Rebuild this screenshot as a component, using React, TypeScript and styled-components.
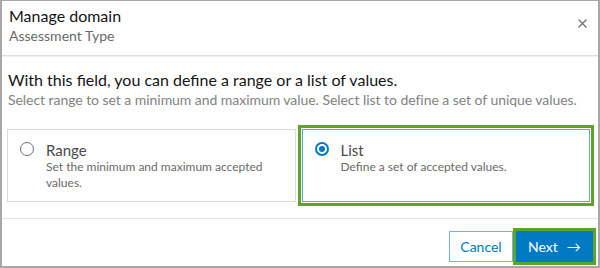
import React from 'react'
import styled, { createGlobalStyle } from 'styled-components'

const GlobalStyle = createGlobalStyle`
  html, body {
    margin: 0;
    padding: 0;
    background: #ffffff;
  }
  body {
    font-family: Lato, "Open Sans", "Liberation Sans", sans-serif;
    -webkit-font-smoothing: antialiased;
  }
`

const Frame = styled.div`
  box-sizing: border-box;
  width: 600px;
  height: 268px;
  border: 2px solid #a7a7a7;
  border-top-width: 1px;
  background: #fff;
  display: flex;
  flex-direction: column;
`

const Header = styled.div`
  display: flex;
  align-items: center;
  justify-content: space-between;
  padding: 4px 8px 10px 7px;
  border-bottom: 1px solid #dedede;
  box-shadow: 0 1px 0 #f1f1f1;
`

const Titles = styled.div`
  display: flex;
  flex-direction: column;
`

const Title = styled.div`
  font-size: 16px;
  line-height: 21px;
  color: #151515;
`

const Subtitle = styled.div`
  font-size: 14px;
  line-height: 19px;
  color: #6a6a6a;
`

const CloseButton = styled.button`
  border: 0;
  background: none;
  padding: 0;
  width: 16px;
  height: 16px;
  margin-top: -3px;
  display: flex;
  align-items: center;
  justify-content: center;
  color: #6a6a6a;
`

const Body = styled.div`
  flex: 1;
  display: flex;
  flex-direction: column;
  padding: 13px 8px 0 5px;
  border-bottom: 1px solid #e3e3e3;
`

const Lead = styled.div`
  font-size: 16px;
  line-height: 21px;
  color: #151515;
  padding-left: 1px;
`

const Hint = styled.div`
  font-size: 14px;
  line-height: 19px;
  letter-spacing: -0.05px;
  color: #828282;
  padding-left: 1px;
`

const Cards = styled.div`
  display: grid;
  grid-template-columns: 1fr 1fr;
  gap: 6px;
  margin-top: 20px;
`

const Card = styled.div<{ $selected?: boolean }>`
  display: flex;
  align-items: flex-start;
  gap: 12px;
  height: 73px;
  box-sizing: border-box;
  padding: 11px 20px 0 12px;
  border: 1px solid ${(p) => (p.$selected ? '#59a9df' : '#dcdcdc')};
  outline: ${(p) => (p.$selected ? '3px solid #5ea42c' : 'none')};
  outline-offset: 1px;
  background: #fff;
`

const Radio = styled.span<{ $checked?: boolean }>`
  flex: none;
  box-sizing: border-box;
  width: 14px;
  height: 14px;
  margin-top: 1px;
  border-radius: 50%;
  border: ${(p) => (p.$checked ? '2px solid #007ac2' : '1px solid #6e6e6e')};
  box-shadow: ${(p) => (p.$checked ? 'inset 0 0 0 1.5px #fff' : 'none')};
  display: flex;
  align-items: center;
  justify-content: center;

  &::after {
    content: '';
    display: ${(p) => (p.$checked ? 'block' : 'none')};
    width: 6px;
    height: 6px;
    border-radius: 50%;
    background: #007ac2;
  }
`

const CardText = styled.div`
  display: flex;
  flex-direction: column;
`

const CardTitle = styled.div`
  font-size: 15px;
  line-height: 18px;
  color: #4a4a4a;
`

const CardDesc = styled.div`
  font-size: 12px;
  line-height: 16px;
  color: #6a6a6a;
`

const Footer = styled.div`
  display: flex;
  justify-content: flex-end;
  align-items: center;
  gap: 3px;
  padding: 12px 5px 4px 0;
`

const Button = styled.button<{ $primary?: boolean }>`
  box-sizing: border-box;
  width: ${(p) => (p.$primary ? '77px' : '64px')};
  height: 31px;
  font-family: inherit;
  font-size: 14px;
  display: flex;
  align-items: center;
  justify-content: ${(p) => (p.$primary ? 'flex-start' : 'center')};
  gap: 9px;
  padding: ${(p) => (p.$primary ? '0 0 0 11px' : '0')};
  border: 1px solid ${(p) => (p.$primary ? '#007ac2' : '#6fb4e2')};
  background: ${(p) => (p.$primary ? '#007ac2' : '#fff')};
  color: ${(p) => (p.$primary ? '#fff' : '#007ac2')};
  outline: ${(p) => (p.$primary ? '3px solid #5ea42c' : 'none')};
  outline-offset: 0;
`

const Arrow = styled.span`
  font-size: 14px;
`

export default function App() {
  return (
    <>
      <GlobalStyle />
      <Frame>
        <Header>
          <Titles>
            <Title>Manage domain</Title>
            <Subtitle>Assessment Type</Subtitle>
          </Titles>
          <CloseButton aria-label="Close">
            <svg width="9" height="9" viewBox="0 0 9 9">
              <path d="M0.5 0.5 L8.5 8.5 M8.5 0.5 L0.5 8.5" stroke="currentColor" strokeWidth="1.1" />
            </svg>
          </CloseButton>
        </Header>
        <Body>
          <Lead>With this field, you can define a range or a list of values.</Lead>
          <Hint>Select range to set a minimum and maximum value. Select list to define a set of unique values.</Hint>
          <Cards>
            <Card>
              <Radio />
              <CardText>
                <CardTitle>Range</CardTitle>
                <CardDesc>Set the minimum and maximum accepted values.</CardDesc>
              </CardText>
            </Card>
            <Card $selected>
              <Radio $checked />
              <CardText>
                <CardTitle>List</CardTitle>
                <CardDesc>Define a set of accepted values.</CardDesc>
              </CardText>
            </Card>
          </Cards>
        </Body>
        <Footer>
          <Button>Cancel</Button>
          <Button $primary>
            Next <Arrow>→</Arrow>
          </Button>
        </Footer>
      </Frame>
    </>
  )
}
